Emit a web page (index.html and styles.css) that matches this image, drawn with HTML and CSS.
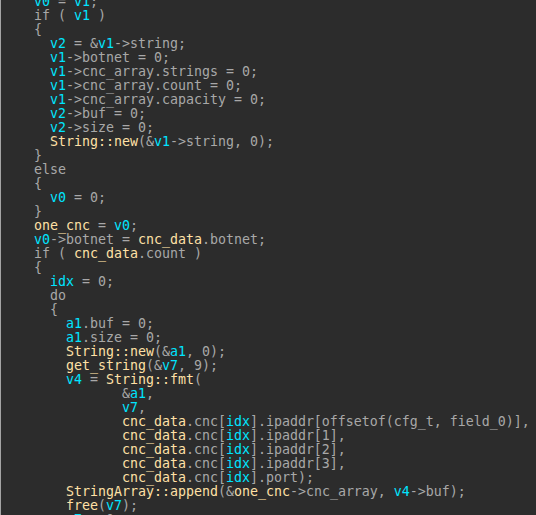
FILE: index.html
```html
<!DOCTYPE html>
<html>
<head>
<meta charset="utf-8">
<link rel="stylesheet" href="styles.css">
</head>
<body>
<div class="view">
<pre class="code">  <span class="v">v0</span> = <span class="v">v1</span>;
  if ( <span class="v">v1</span> )
  {
    <span class="v">v2</span> = &amp;<span class="v">v1</span>-&gt;string;
    <span class="v">v1</span>-&gt;botnet = 0;
    <span class="v">v1</span>-&gt;cnc_array.strings = 0;
    <span class="v">v1</span>-&gt;cnc_array.count = 0;
    <span class="v">v1</span>-&gt;cnc_array.capacity = 0;
    <span class="v">v2</span>-&gt;buf = 0;
    <span class="v">v2</span>-&gt;size = 0;
    <span class="g">String::new</span>(&amp;<span class="v">v1</span>-&gt;string, 0);
  }
  else
  {
    <span class="v">v0</span> = 0;
  }
  <span class="g">one_cnc</span> = <span class="v">v0</span>;
  <span class="v">v0</span>-&gt;botnet = <span class="g">cnc_data</span>.botnet;
  if ( <span class="g">cnc_data</span>.count )
  {
    <span class="v">idx</span> = 0;
    do
    {
      <span class="v">a1</span>.buf = 0;
      <span class="v">a1</span>.size = 0;
      <span class="g">String::new</span>(&amp;<span class="v">a1</span>, 0);
      <span class="g">get_string</span>(&amp;<span class="v">v7</span>, 9);
      <span class="v">v4</span> = <span class="g">String::fmt</span>(
             &amp;<span class="v">a1</span>,
             <span class="v">v7</span>,
             <span class="g">cnc_data</span>.cnc[<span class="v">idx</span>].ipaddr[offsetof(cfg_t, field_0)],
             <span class="g">cnc_data</span>.cnc[<span class="v">idx</span>].ipaddr[1],
             <span class="g">cnc_data</span>.cnc[<span class="v">idx</span>].ipaddr[2],
             <span class="g">cnc_data</span>.cnc[<span class="v">idx</span>].ipaddr[3],
             <span class="g">cnc_data</span>.cnc[<span class="v">idx</span>].port);
      <span class="g">StringArray::append</span>(&amp;<span class="g">one_cnc</span>-&gt;cnc_array, <span class="v">v4</span>-&gt;buf);
      <span class="g">free</span>(<span class="v">v7</span>);
      <span class="v">v7</span> = 0;</pre>
</div>
</body>
</html>
```

FILE: styles.css
```css
html, body {
  margin: 0;
  padding: 0;
  background: #2c2c2c;
  height: 100%;
  overflow: hidden;
}

.view {
  height: 515px;
  overflow: hidden;
  border-left: 1px solid #a4a4a4;
  background: #2c2c2c;
}

.code {
  margin: -5px 0 0 0;
  padding-left: 17px;
  font-family: "DejaVu Sans Mono", monospace;
  font-size: 13.29px;
  line-height: 14px;
  color: #a8a8a8;
  white-space: pre;
}

.v {
  color: #00e4ff;
}

.g {
  color: #ffe0a6;
}
```
